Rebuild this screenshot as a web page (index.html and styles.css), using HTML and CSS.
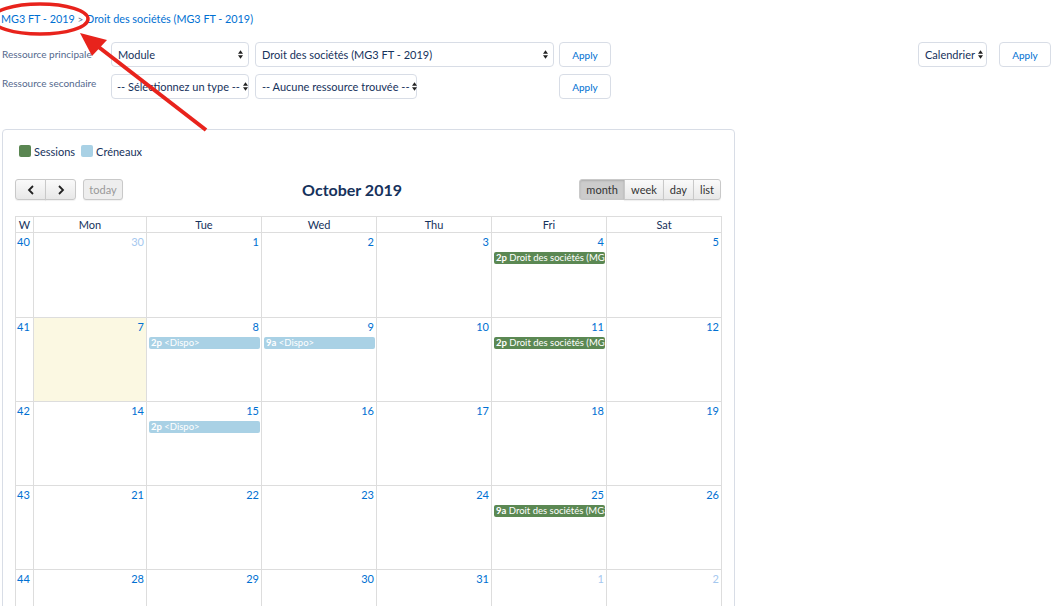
FILE: index.html
```html
<!DOCTYPE html>
<html lang="fr">
<head>
<meta charset="UTF-8">
<title>Planning - Droit des sociétés</title>
<link rel="stylesheet" href="styles.css">
</head>
<body>

<div class="breadcrumb">
  <a href="#">MG3 FT - 2019</a> <span class="sep">&gt;</span> <a href="#">Droit des sociétés (MG3 FT - 2019)</a>
</div>

<div class="filters">
  <div class="filter-left">
    <div class="filter-row">
      <span class="label">Ressource principale</span>
      <div class="select w-type">Module <svg class="caret" viewBox="0 0 6 10"><path d="M3 0 L6 4 H0 Z M3 10 L6 6 H0 Z"/></svg></div>
      <div class="select w-res">Droit des sociétés (MG3 FT - 2019) <svg class="caret" viewBox="0 0 6 10"><path d="M3 0 L6 4 H0 Z M3 10 L6 6 H0 Z"/></svg></div>
      <button class="btn-apply">Apply</button>
    </div>
    <div class="filter-row">
      <span class="label">Ressource secondaire</span>
      <div class="select w-type">-- Sélectionnez un type -- <svg class="caret" viewBox="0 0 6 10"><path d="M3 0 L6 4 H0 Z M3 10 L6 6 H0 Z"/></svg></div>
      <div class="select w-none">-- Aucune ressource trouvée -- <svg class="caret" viewBox="0 0 6 10"><path d="M3 0 L6 4 H0 Z M3 10 L6 6 H0 Z"/></svg></div>
      <button class="btn-apply push">Apply</button>
    </div>
  </div>
  <div class="filter-right">
    <div class="select w-cal">Calendrier <svg class="caret" viewBox="0 0 6 10"><path d="M3 0 L6 4 H0 Z M3 10 L6 6 H0 Z"/></svg></div>
    <button class="btn-apply">Apply</button>
  </div>
</div>

<div class="card">
  <div class="legend">
    <span class="swatch green"></span> Sessions
    <span class="swatch blue"></span> Créneaux
  </div>

  <div class="toolbar">
    <div class="tb-left">
      <div class="btn-group">
        <button class="fc-btn"><svg viewBox="0 0 8 10" width="8" height="10"><path d="M6 1 L2 5 L6 9" fill="none" stroke="#222" stroke-width="1.8"/></svg></button>
        <button class="fc-btn"><svg viewBox="0 0 8 10" width="8" height="10"><path d="M2 1 L6 5 L2 9" fill="none" stroke="#222" stroke-width="1.8"/></svg></button>
      </div>
      <button class="fc-btn disabled">today</button>
    </div>
    <h2 class="title">October 2019</h2>
    <div class="btn-group">
      <button class="fc-btn active">month</button>
      <button class="fc-btn">week</button>
      <button class="fc-btn">day</button>
      <button class="fc-btn">list</button>
    </div>
  </div>

  <table class="month">
    <colgroup>
      <col class="c-week"><col class="c-mon"><col><col><col><col><col>
    </colgroup>
    <thead>
      <tr><th>W</th><th>Mon</th><th>Tue</th><th>Wed</th><th>Thu</th><th>Fri</th><th>Sat</th></tr>
    </thead>
    <tbody>
      <tr>
        <td class="wk">40</td>
        <td><div class="num other">30</div></td>
        <td><div class="num">1</div></td>
        <td><div class="num">2</div></td>
        <td><div class="num">3</div></td>
        <td><div class="num">4</div><div class="event session"><b>2p</b> Droit des sociétés (MG3 FT - 2019)</div></td>
        <td><div class="num">5</div></td>
      </tr>
      <tr>
        <td class="wk">41</td>
        <td class="today"><div class="num">7</div></td>
        <td><div class="num">8</div><div class="event slot"><b>2p</b> &lt;Dispo&gt;</div></td>
        <td><div class="num">9</div><div class="event slot"><b>9a</b> &lt;Dispo&gt;</div></td>
        <td><div class="num">10</div></td>
        <td><div class="num">11</div><div class="event session"><b>2p</b> Droit des sociétés (MG3 FT - 2019)</div></td>
        <td><div class="num">12</div></td>
      </tr>
      <tr>
        <td class="wk">42</td>
        <td><div class="num">14</div></td>
        <td><div class="num">15</div><div class="event slot"><b>2p</b> &lt;Dispo&gt;</div></td>
        <td><div class="num">16</div></td>
        <td><div class="num">17</div></td>
        <td><div class="num">18</div></td>
        <td><div class="num">19</div></td>
      </tr>
      <tr>
        <td class="wk">43</td>
        <td><div class="num">21</div></td>
        <td><div class="num">22</div></td>
        <td><div class="num">23</div></td>
        <td><div class="num">24</div></td>
        <td><div class="num">25</div><div class="event session"><b>9a</b> Droit des sociétés (MG3 FT - 2019)</div></td>
        <td><div class="num">26</div></td>
      </tr>
      <tr>
        <td class="wk">44</td>
        <td><div class="num">28</div></td>
        <td><div class="num">29</div></td>
        <td><div class="num">30</div></td>
        <td><div class="num">31</div></td>
        <td><div class="num other">1</div></td>
        <td><div class="num other">2</div></td>
      </tr>
    </tbody>
  </table>
</div>

<!-- red annotation drawn over the screenshot -->
<svg class="annotation" width="260" height="140" viewBox="0 0 260 140">
  <ellipse cx="40" cy="19" rx="48" ry="15" fill="none" stroke="#e8231c" stroke-width="3.5"/>
  <line x1="206" y1="130" x2="96" y2="45" stroke="#e8231c" stroke-width="4"/>
  <polygon points="80,33 107,40 92,56" fill="#e8231c"/>
</svg>

</body>
</html>
```

FILE: styles.css
```css
body {
  margin: 0;
  font-family: Lato, "Open Sans", sans-serif;
  color: #16325c;
  background: #ffffff;
  width: 1051px;
  height: 606px;
  overflow: hidden;
  position: relative;
}

a {
  color: #0070d2;
  text-decoration: none;
}

.breadcrumb {
  padding: 12px 0 0 1px;
  height: 18px;
  font-size: 10.8px;
  color: #0070d2;
}

.breadcrumb .sep {
  color: #54698d;
  font-size: 10px;
}

/* filter bar */
.filters {
  display: flex;
  justify-content: space-between;
  margin-top: 12px;
}

.filter-row {
  display: flex;
  align-items: flex-start;
  height: 25px;
  margin-bottom: 7px;
}

.label {
  width: 111px;
  padding-left: 2px;
  box-sizing: border-box;
  font-size: 10px;
  color: #54698d;
  padding-top: 6px;
  white-space: nowrap;
}

.filter-row:nth-child(2) .label {
  padding-top: 3px;
}

.select {
  height: 25px;
  box-sizing: border-box;
  border: 1px solid #d8dde6;
  border-radius: 4px;
  background: #fff;
  font-size: 11px;
  color: #16325c;
  display: flex;
  align-items: center;
  justify-content: space-between;
  padding: 0 5px 0 6px;
  margin-right: 6px;
  white-space: nowrap;
}

.caret {
  width: 5px;
  height: 9px;
  fill: #222;
  flex-shrink: 0;
  margin-left: 3px;
}

.w-type { width: 138px; }
.w-res { width: 299px; }
.w-none { width: 162px; }
.w-cal { width: 69px; margin-right: 13px; padding: 0 4px 0 6px; }

.filter-row:nth-child(2) .select.w-type { padding-left: 5px; }

.btn-apply {
  height: 25px;
  width: 52px;
  box-sizing: border-box;
  border: 1px solid #d8dde6;
  border-radius: 4px;
  background: #fff;
  color: #0070d2;
  font-family: Lato, "Open Sans", sans-serif;
  font-size: 10px;
  padding: 0;
  margin-left: -1px;
}

.btn-apply.push {
  margin-left: 136px;
}

.filter-right {
  display: flex;
  margin-left: auto;
}

/* calendar card */
.card {
  margin: 23px 0 0 2px;
  width: 733px;
  height: 500px;
  box-sizing: border-box;
  border: 1px solid #d8dde6;
  border-radius: 4px;
  padding: 14px 13px 0 12px;
}

.legend {
  display: flex;
  align-items: center;
  font-size: 11px;
  color: #16325c;
  height: 14px;
  padding-left: 4px;
}

.swatch {
  width: 12px;
  height: 12px;
  border-radius: 2px;
  margin-right: 3px;
}

.swatch.green { background: #5a8652; }
.swatch.blue { background: #a9d1e5; margin-left: 6px; }

.toolbar {
  display: flex;
  justify-content: space-between;
  align-items: center;
  margin-top: 21px;
  height: 21px;
}

.tb-left {
  display: flex;
  gap: 8px;
}

.title {
  margin: 0 0 0 2px;
  font-size: 16px;
  font-weight: 700;
  color: #16325c;
}

.btn-group {
  display: flex;
}

.fc-btn {
  height: 21px;
  box-sizing: border-box;
  border: 1px solid #c9c9c9;
  background: linear-gradient(#fafafa, #e8e8e8);
  font-family: Lato, "Open Sans", sans-serif;
  font-size: 11px;
  color: #333;
  padding: 0 6px;
  margin-left: -1px;
  display: flex;
  align-items: center;
  justify-content: center;
  box-shadow: 0 1px 1px rgba(0, 0, 0, 0.06);
}

.btn-group .fc-btn:first-child { border-radius: 3px 0 0 3px; margin-left: 0; }
.btn-group .fc-btn:last-child { border-radius: 0 3px 3px 0; }

.tb-left .btn-group .fc-btn { width: 31px; }

.fc-btn.disabled {
  border-radius: 3px;
  color: #999;
  width: 40px;
  background: #eeeeee;
}

.fc-btn.active {
  background: #cccccc;
  box-shadow: inset 0 1px 2px rgba(0, 0, 0, 0.15);
  width: 46px;
}

/* month grid */
.month {
  margin-top: 16px;
  border-collapse: collapse;
  width: 707px;
  table-layout: fixed;
  font-size: 11px;
}

.c-week { width: 18px; }
.c-mon { width: 113px; }

.month th {
  height: 15px;
  border: 1px solid #dddddd;
  font-weight: 400;
  color: #16325c;
  font-size: 11px;
  padding: 0;
}

.month td {
  height: 81px;
  border: 1px solid #dddddd;
  vertical-align: top;
  padding: 0;
}

.month tbody tr:first-child td {
  height: 82px;
}

.month td.wk {
  color: #0070d2;
  padding: 2px 0 0 1px;
  font-size: 11px;
}

.month td.today {
  background: #fbf8e2;
}

.num {
  text-align: right;
  color: #0070d2;
  padding: 2px 2px 0 0;
  height: 14px;
}

.num.other {
  color: #a5c8ef;
}

.event {
  margin: 3px 1px 0 2px;
  height: 12px;
  line-height: 12px;
  border-radius: 2px;
  color: #fff;
  font-size: 9.5px;
  padding-left: 2px;
  white-space: nowrap;
  overflow: hidden;
  text-overflow: clip;
}

.event.session { background: #5b8853; }
.event.slot { background: #a9d1e5; }

.annotation {
  position: absolute;
  left: 0;
  top: 0;
  pointer-events: none;
}
```
